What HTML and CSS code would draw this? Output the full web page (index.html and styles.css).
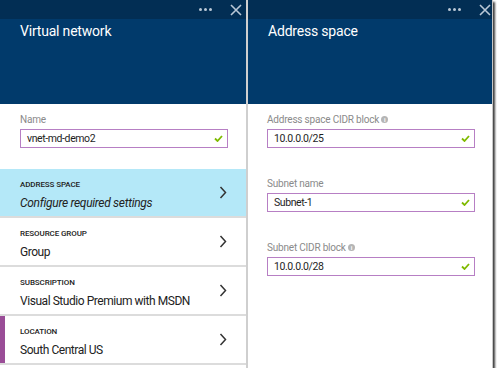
FILE: index.html
```html
<!DOCTYPE html>
<html lang="en">
<head>
    <meta charset="UTF-8">
    <title>Virtual network</title>
    <link rel="stylesheet" href="styles.css">
</head>
<body>
    <div class="frame">
        <section class="blade blade-left">
            <header class="blade-head">
                <div class="blade-bar">
                    <span class="dots"><i></i><i></i><i></i></span>
                    <svg class="close" width="12" height="12" viewBox="0 0 12 12"><path d="M1 1 L11 11 M11 1 L1 11" stroke="#b9c7d6" stroke-width="1.6" fill="none"/></svg>
                </div>
                <h1>Virtual network</h1>
            </header>
            <div class="blade-body">
                <div class="field name-field">
                    <label>Name</label>
                    <div class="box">vnet-md-demo2
                        <svg class="check" width="9" height="7" viewBox="0 0 9 7"><path d="M1 3.5 L3.5 6 L8 1" stroke="#7fba00" stroke-width="1.8" fill="none"/></svg>
                    </div>
                </div>
                <ul class="rows">
                    <li class="row active">
                        <div><span class="cap">ADDRESS SPACE</span><span class="val italic">Configure required settings</span></div>
                        <svg class="chev" width="8" height="13" viewBox="0 0 8 13"><path d="M1.5 1 L6.5 6.5 L1.5 12" stroke="#333" stroke-width="1.5" fill="none"/></svg>
                    </li>
                    <li class="row">
                        <div><span class="cap">RESOURCE GROUP</span><span class="val">Group</span></div>
                        <svg class="chev" width="8" height="13" viewBox="0 0 8 13"><path d="M1.5 1 L6.5 6.5 L1.5 12" stroke="#333" stroke-width="1.5" fill="none"/></svg>
                    </li>
                    <li class="row">
                        <div><span class="cap">SUBSCRIPTION</span><span class="val">Visual Studio Premium with MSDN</span></div>
                        <svg class="chev" width="8" height="13" viewBox="0 0 8 13"><path d="M1.5 1 L6.5 6.5 L1.5 12" stroke="#333" stroke-width="1.5" fill="none"/></svg>
                    </li>
                    <li class="row marked">
                        <div><span class="cap">LOCATION</span><span class="val">South Central US</span></div>
                        <svg class="chev" width="8" height="13" viewBox="0 0 8 13"><path d="M1.5 1 L6.5 6.5 L1.5 12" stroke="#333" stroke-width="1.5" fill="none"/></svg>
                    </li>
                </ul>
            </div>
        </section>
        <section class="blade blade-right">
            <header class="blade-head">
                <div class="blade-bar">
                    <span class="dots"><i></i><i></i><i></i></span>
                    <svg class="close" width="12" height="12" viewBox="0 0 12 12"><path d="M1 1 L11 11 M11 1 L1 11" stroke="#b9c7d6" stroke-width="1.6" fill="none"/></svg>
                </div>
                <h1>Address space</h1>
            </header>
            <div class="blade-body">
                <div class="field">
                    <label>Address space CIDR block <span class="info">i</span></label>
                    <div class="box">10.0.0.0/25
                        <svg class="check" width="9" height="7" viewBox="0 0 9 7"><path d="M1 3.5 L3.5 6 L8 1" stroke="#7fba00" stroke-width="1.8" fill="none"/></svg>
                    </div>
                </div>
                <div class="field">
                    <label>Subnet name</label>
                    <div class="box">Subnet-1
                        <svg class="check" width="9" height="7" viewBox="0 0 9 7"><path d="M1 3.5 L3.5 6 L8 1" stroke="#7fba00" stroke-width="1.8" fill="none"/></svg>
                    </div>
                </div>
                <div class="field">
                    <label>Subnet CIDR block <span class="info">i</span></label>
                    <div class="box">10.0.0.0/28
                        <svg class="check" width="9" height="7" viewBox="0 0 9 7"><path d="M1 3.5 L3.5 6 L8 1" stroke="#7fba00" stroke-width="1.8" fill="none"/></svg>
                    </div>
                </div>
            </div>
        </section>
    </div>
</body>
</html>
```

FILE: styles.css
```css
*{margin: 0;padding: 0;box-sizing: border-box;font-family: Roboto, "Open Sans", sans-serif;}
body{background: #ffffff;}
.frame{display: flex;width: 493px;height: 368px;background: #ffffff;border-right: 1px solid #c8c8c8;box-shadow: 2px 2px 2px rgba(0,0,0,0.75);overflow: hidden;}
.blade{display: flex;flex-direction: column;}
.blade-left{width: 248px;border-right: 2px solid #cfcfcf;}
.blade-right{flex: 1;}
.blade-head{height: 104px;background: #013a6b;}
.blade-bar{height: 19px;background: #022e54;display: flex;align-items: center;justify-content: flex-end;gap: 18px;padding-right: 4px;}
.blade-right .blade-bar{padding-right: 2px;}
.dots{display: flex;gap: 2px;}
.dots i{width: 3px;height: 3px;border-radius: 50%;background: #b9c7d6;}
.close{display: block;}
.blade-head h1{color: #ffffff;font-weight: 400;font-size: 14px;line-height: 20px;padding: 2px 0 0 20px;letter-spacing: -0.2px;}
.blade-body{flex: 1;}
.field{padding: 9px 18px 0 20px;}
.blade-right .field{padding: 9px 18px 20px 19px;}
.field label{display: block;color: #8a8a8a;font-size: 10px;line-height: 14px;height: 16px;letter-spacing: -0.2px;}
.box{position: relative;width: 208px;height: 19px;border: 1px solid #b77fc4;padding-left: 6px;font-size: 10.5px;line-height: 17px;color: #1e1e1e;letter-spacing: -0.4px;}
.check{position: absolute;right: 4px;top: 5px;}
.info{display: inline-block;width: 7px;height: 7px;border-radius: 50%;background: #b5b5b5;color: #fff;font-size: 6px;line-height: 7px;text-align: center;vertical-align: 1px;font-weight: 700;letter-spacing: 0;}
.name-field{height: 65px;}
.rows{list-style: none;}
.row{position: relative;height: 49px;border-bottom: 2px solid #dcdcdc;display: flex;align-items: center;justify-content: space-between;padding: 6px 19px 0 20px;}
.row.active{background: #b4e8f8;}
.row.marked::before{content: "";position: absolute;left: 0;top: 0;bottom: 0;width: 5px;background: #9a4d97;}
.row div{display: flex;flex-direction: column;}
.cap{font-size: 8px;line-height: 12px;font-weight: 500;color: #222;letter-spacing: -0.1px;}
.val{font-size: 12px;line-height: 17px;color: #222;margin-top: 4px;letter-spacing: -0.45px;}
.italic{letter-spacing: -0.3px;font-style: italic;}
.chev{display: block;margin-top: -7px;}
```
